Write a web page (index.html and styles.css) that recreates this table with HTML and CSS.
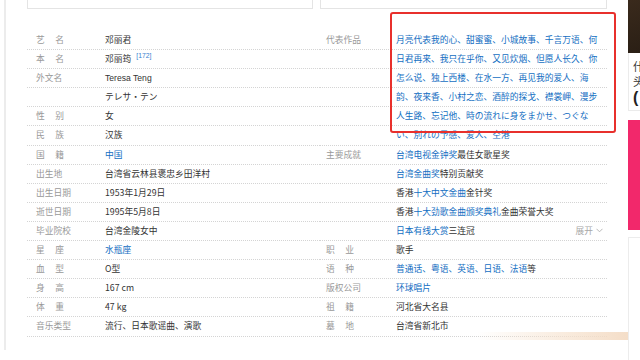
FILE: index.html
```html
<!DOCTYPE html>
<html lang="zh-CN">
<head>
<meta charset="utf-8">
<title>邓丽君</title>
<link rel="stylesheet" href="styles.css">
</head>
<body>
<div class="page">
  <div class="rail"></div>
  <div class="main">
    <div class="top-boxes">
      <div class="top-box box-left"></div>
      <div class="top-box box-right"></div>
    </div>
    <div class="info">
      <dl class="col col-left">
        <div class="row"><dt class="label spaced">艺名</dt><dd class="value">邓丽君</dd></div>
        <div class="row"><dt class="label spaced">本名</dt><dd class="value">邓丽筠<sup class="ref">[172]</sup></dd></div>
        <div class="row"><dt class="label">外文名</dt><dd class="value latin">Teresa Teng</dd></div>
        <div class="row"><dt class="label"></dt><dd class="value">テレサ·テン</dd></div>
        <div class="row"><dt class="label spaced">性别</dt><dd class="value">女</dd></div>
        <div class="row"><dt class="label spaced">民族</dt><dd class="value">汉族</dd></div>
        <div class="row"><dt class="label spaced">国籍</dt><dd class="value"><a class="link">中国</a></dd></div>
        <div class="row"><dt class="label">出生地</dt><dd class="value">台湾省云林县褒忠乡田洋村</dd></div>
        <div class="row"><dt class="label">出生日期</dt><dd class="value">1953年1月29日</dd></div>
        <div class="row"><dt class="label">逝世日期</dt><dd class="value">1995年5月8日</dd></div>
        <div class="row"><dt class="label">毕业院校</dt><dd class="value">台湾金陵女中</dd></div>
        <div class="row"><dt class="label spaced">星座</dt><dd class="value"><a class="link">水瓶座</a></dd></div>
        <div class="row"><dt class="label spaced">血型</dt><dd class="value">O型</dd></div>
        <div class="row"><dt class="label spaced">身高</dt><dd class="value">167 cm</dd></div>
        <div class="row"><dt class="label spaced">体重</dt><dd class="value">47 kg</dd></div>
        <div class="row"><dt class="label">音乐类型</dt><dd class="value">流行、日本歌谣曲、演歌</dd></div>
      </dl>
      <dl class="col col-right">
        <div class="row"><dt class="label">代表作品</dt><dd class="value link">月亮代表我的心、甜蜜蜜、小城故事、千言万语、何</dd></div>
        <div class="row"><dt class="label"></dt><dd class="value link">日君再来、我只在乎你、又见炊烟、但愿人长久、你</dd></div>
        <div class="row"><dt class="label"></dt><dd class="value link">怎么说、独上西楼、在水一方、再见我的爱人、海</dd></div>
        <div class="row"><dt class="label"></dt><dd class="value link">韵、夜来香、小村之恋、酒醉的探戈、襟裳岬、漫步</dd></div>
        <div class="row"><dt class="label"></dt><dd class="value link">人生路、忘记他、時の流れに身をまかせ、つぐな</dd></div>
        <div class="row"><dt class="label"></dt><dd class="value link">い、別れの予感、爱人、空港</dd></div>
        <div class="row"><dt class="label">主要成就</dt><dd class="value"><a class="link">台湾电视金钟奖</a>最佳女歌星奖</dd></div>
        <div class="row"><dt class="label"></dt><dd class="value"><a class="link">台湾金曲奖</a>特别贡献奖</dd></div>
        <div class="row"><dt class="label"></dt><dd class="value">香港<a class="link">十大中文金曲</a>金针奖</dd></div>
        <div class="row"><dt class="label"></dt><dd class="value">香港<a class="link">十大劲歌金曲颁奖典礼</a>金曲荣誉大奖</dd></div>
        <div class="row"><dt class="label"></dt><dd class="value grow"><a class="link">日本有线大赏</a>三连冠</dd><span class="more">展开<svg class="chev" width="7" height="5" viewBox="0 0 7 5"><path d="M0.5 0.8 L3.5 3.8 L6.5 0.8" fill="none" stroke="#b0b0b0" stroke-width="0.9"/></svg></span></div>
        <div class="row"><dt class="label spaced">职业</dt><dd class="value">歌手</dd></div>
        <div class="row"><dt class="label spaced">语种</dt><dd class="value"><a class="link">普通话</a><span class="link">、</span><a class="link">粤语</a><span class="link">、</span><a class="link">英语</a><span class="link">、</span><a class="link">日语</a><span class="link">、</span><a class="link">法语</a>等</dd></div>
        <div class="row"><dt class="label">版权公司</dt><dd class="value"><a class="link">环球唱片</a></dd></div>
        <div class="row"><dt class="label spaced">祖籍</dt><dd class="value">河北省大名县</dd></div>
        <div class="row"><dt class="label spaced">墓地</dt><dd class="value">台湾省新北市</dd></div>
      </dl>
    </div>
  </div>
  <aside class="side">
    <div class="side-photo"></div>
    <div class="side-card">
      <div class="side-line">什么</div>
      <div class="side-line">头条</div>
      <div class="side-big">(</div>
    </div>
    <div class="side-banner"></div>
    <div class="side-card2"></div>
  </aside>
</div>
<div class="annot"></div>
<div class="glow"></div>
</body>
</html>
```

FILE: styles.css
```css
html, body {
  margin: 0;
  padding: 0;
}
body {
  width: 640px;
  height: 360px;
  overflow: hidden;
  background: #ffffff;
  font-family: "Noto Sans CJK SC", "Liberation Sans", sans-serif;
  font-size: 8.75px;
  color: #333333;
  position: relative;
}
.page {
  display: flex;
  align-items: flex-start;
  width: 940px;
}
.rail {
  margin-left: 4px;
  width: 2px;
  height: 350px;
  background: #ececec;
  flex: none;
}
.main {
  margin-left: 21px;
  width: 580px;
  flex: none;
}
.top-boxes {
  display: flex;
  gap: 7px;
  height: 9px;
}
.top-box {
  height: 8px;
  border: 1px solid #e4e4e4;
  border-top: none;
  box-sizing: content-box;
}
.box-left { width: 284px; }
.box-right { width: 285px; }
.info {
  display: flex;
  margin-top: 22px;
}
.col {
  margin: 0;
  padding: 0;
}
.col-left { width: 293px; }
.col-right { width: 287px; }
.row {
  display: flex;
  align-items: center;
  height: 18.1px;
  line-height: 18.1px;
  border-bottom: 1px dotted #d4d4d4;
  white-space: nowrap;
}
.label {
  margin: 0;
  color: #999999;
  flex: none;
}
.col-left .label {
  width: 69px;
  padding-left: 9px;
}
.col-right .label {
  width: 70px;
  padding-left: 6px;
}
.label.spaced {
  letter-spacing: 10.6px;
}
.value {
  margin: 0;
  color: #333333;
}
.value.grow { flex: 1; }
.latin {
  font-family: "Liberation Sans", "Noto Sans CJK SC", sans-serif;
  font-size: 8.6px;
}
.link {
  color: #136ec2;
  text-decoration: none;
}
.ref {
  font-family: "Liberation Sans", sans-serif;
  font-size: 6.8px;
  color: #3a7fd0;
  margin-left: 5px;
  vertical-align: 4px;
  line-height: 0;
}
.more {
  color: #a8a8a8;
  padding-right: 4px;
  display: flex;
  align-items: center;
  gap: 3px;
}
.chev { display: block; }
.side {
  margin-left: 21px;
  width: 300px;
  flex: none;
}
.side-photo {
  height: 53px;
  background: linear-gradient(160deg, #3a2a1c 0%, #1f1710 60%, #2c2118 100%);
}
.side-card {
  height: 58px;
  border: 1px solid #ebebeb;
  border-top: none;
  padding-left: 4px;
  box-sizing: border-box;
  padding-top: 6px;
}
.side-line {
  font-size: 11px;
  line-height: 15px;
  color: #333333;
}
.side-big {
  font-family: "Liberation Sans", sans-serif;
  font-size: 16px;
  font-weight: bold;
  line-height: 17px;
  color: #222222;
}
.side-banner {
  margin-top: 9px;
  height: 110px;
  background: #f2286b;
}
.side-card2 {
  margin-top: 7px;
  height: 130px;
  border: 1px solid #ececec;
  box-sizing: border-box;
}
.annot {
  position: absolute;
  left: 390px;
  top: 12px;
  width: 222px;
  height: 117px;
  border: 2px solid #e8302c;
  border-radius: 3px;
}
.glow {
  position: absolute;
  left: 477px;
  top: 332px;
  width: 151px;
  height: 8px;
  background: linear-gradient(to right, rgba(248, 232, 216, 0) 0%, rgba(246, 226, 206, 0.7) 60%, rgba(243, 218, 194, 0.9) 100%);
}
```
